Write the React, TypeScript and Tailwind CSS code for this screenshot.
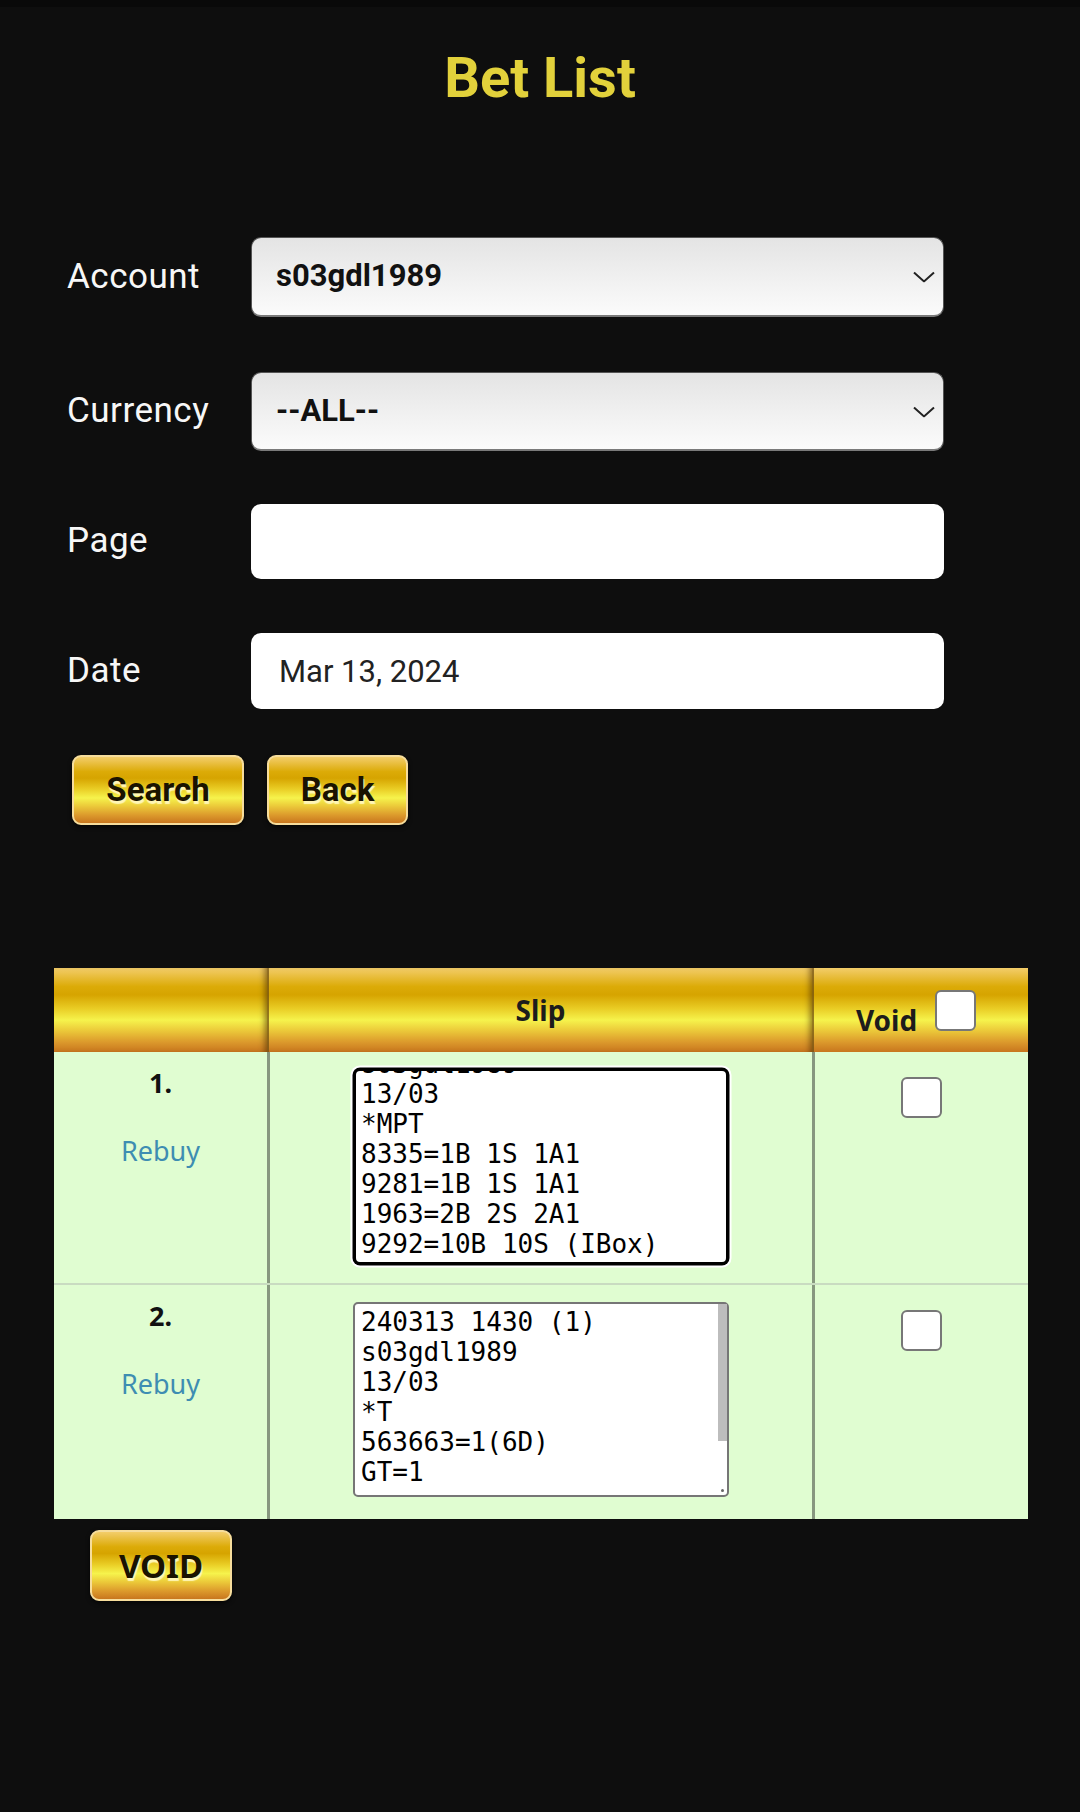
import { useEffect, useRef } from "react";

const gold =
  "bg-[linear-gradient(to_bottom,#f3cd6a_0%,#dcab08_22%,#d6a400_32%,#e9cc24_48%,#f6f34c_62%,#eccb3a_74%,#dc9a2c_88%,#c8761e_100%)]";

const goldButton =
  "flex items-center justify-center rounded-[9px] border-2 border-[#f6dd9c] text-[33px] font-bold text-[#1a1300] [text-shadow:1px_3px_1px_#fff6b8] shadow-[0_2px_4px_rgba(0,0,0,0.7)]";

const slipText = [
  "240313 1430 (1)",
  "s03gdl1989",
  "13/03",
  "*MPT",
  "8335=1B 1S 1A1",
  "9281=1B 1S 1A1",
  "1963=2B 2S 2A1",
  "9292=10B 10S (IBox)",
  "",
].join("\n");

const slipText2 = ["240313 1430 (1)", "s03gdl1989", "13/03", "*T", "563663=1(6D)", "GT=1", "", ""].join("\n");

function Chevron() {
  return (
    <svg
      width="22"
      height="11"
      viewBox="0 0 22 11"
      className="pointer-events-none absolute right-[9px] top-1/2 -translate-y-1/2"
    >
      <polyline points="1,1 11,10 21,1" fill="none" stroke="#222" strokeWidth="2" />
    </svg>
  );
}

function FormRow({ label, className, children }: { label: string; className: string; children: React.ReactNode }) {
  return (
    <div className={`flex items-center ${className}`}>
      <label className="w-[184px] text-[35px] tracking-[0.5px] text-[#f7f7f7]">{label}</label>
      <div className="relative w-[693px]">{children}</div>
    </div>
  );
}

function Checkbox() {
  return (
    <input
      type="checkbox"
      className="h-[41px] w-[41px] appearance-none rounded-[6px] border-2 border-[#777] bg-white"
    />
  );
}

export default function App() {
  const firstSlip = useRef<HTMLTextAreaElement>(null);

  useEffect(() => {
    if (firstSlip.current) firstSlip.current.scrollTop = 55;
  }, []);

  return (
    <div className="min-h-screen bg-[#0e0e0e] font-['Roboto',sans-serif]">
      <div className="h-[7px] bg-[#090909]" />
      <h1 className="mt-[38px] text-center text-[56px] font-bold leading-[66px] text-[#e2d13b]">Bet List</h1>

      <form className="mt-[126px] pl-[67px]">
        <FormRow label="Account" className="h-[80px]">
          <select className="h-[80px] w-full appearance-none rounded-[10px] border border-[#555] border-b-2 border-b-[#7a7a7a] bg-[linear-gradient(to_bottom,#e4e4e4,#fbfbfb)] pl-[24px] text-[31px] font-bold text-[#111]">
            <option>s03gdl1989</option>
          </select>
          <Chevron />
        </FormRow>

        <FormRow label="Currency" className="mt-[55px] h-[79px]">
          <select className="h-[79px] w-full appearance-none rounded-[10px] border border-[#555] border-b-2 border-b-[#7a7a7a] bg-[linear-gradient(to_bottom,#e4e4e4,#fbfbfb)] pl-[24px] text-[31px] font-bold text-[#111]">
            <option>--ALL--</option>
          </select>
          <Chevron />
        </FormRow>

        <FormRow label="Page" className="mt-[53px] h-[75px]">
          <input type="text" className="h-[75px] w-full rounded-[10px] bg-white px-[28px] text-[31px] text-[#222]" />
        </FormRow>

        <FormRow label="Date" className="mt-[54px] h-[76px]">
          <input
            type="text"
            defaultValue="Mar 13, 2024"
            className="h-[76px] w-full rounded-[10px] bg-white px-[28px] text-[31px] text-[#222]"
          />
        </FormRow>

        <div className="mt-[46px] flex gap-[23px] pl-[5px]">
          <button type="button" className={`${goldButton} ${gold} h-[70px] w-[172px]`}>
            Search
          </button>
          <button type="button" className={`${goldButton} ${gold} h-[70px] w-[141px]`}>
            Back
          </button>
        </div>
      </form>

      <div className="ml-[54px] mt-[143px] w-[974px] font-['Noto_Sans',sans-serif]">
        {/* header */}
        <div className={`grid h-[84px] grid-cols-[213px_545px_216px] ${gold}`}>
          <div className="shadow-[inset_-6px_0_6px_-4px_rgba(70,40,0,0.6)]" />
          <div className="flex items-center justify-center border-l-2 border-[#6b4a10]/70 text-[28px] font-bold text-[#1c1c1c] shadow-[inset_-6px_0_6px_-4px_rgba(70,40,0,0.6)]">
            Slip
          </div>
          <div className="flex items-center justify-center gap-[18px] border-l-2 border-[#6b4a10]/70 pr-[10px] text-[28px] font-bold text-[#1c1c1c]">
            <span className="mt-[20px]">Void</span>
            <Checkbox />
          </div>
        </div>

        {/* rows */}
        <div className="grid h-[231px] grid-cols-[213px_545px_216px] bg-[#e0fdd1]">
          <div className="flex flex-col items-center pt-[14px]">
            <span className="text-[27px] font-bold leading-[34px] text-[#111]">1.</span>
            <a href="#" className="mt-[34px] text-[27px] leading-[34px] text-[#3e8db2]">
              Rebuy
            </a>
          </div>
          <div className="flex justify-center border-l-[3px] border-[#87977f] pt-[17px]">
            <textarea
              ref={firstSlip}
              readOnly
              wrap="off"
              defaultValue={slipText}
              className="block h-[195px] w-[374px] resize-none overflow-hidden rounded-[6px] border-2 border-black bg-white px-[5px] pt-[3px] font-['DejaVu_Sans_Mono',monospace] text-[26px] leading-[30px] text-black shadow-[0_0_0_1.5px_#000,0_0_0_3.5px_#fff] outline-none [scrollbar-width:none]"
            />
          </div>
          <div className="flex justify-center border-l-[3px] border-[#87977f] pt-[25px]">
            <Checkbox />
          </div>
        </div>

        <div className="grid h-[236px] grid-cols-[213px_545px_216px] border-t-2 border-[#c9dbc1] bg-[#e0fdd1]">
          <div className="flex flex-col items-center pt-[14px]">
            <span className="text-[27px] font-bold leading-[34px] text-[#111]">2.</span>
            <a href="#" className="mt-[34px] text-[27px] leading-[34px] text-[#3e8db2]">
              Rebuy
            </a>
          </div>
          <div className="flex items-start justify-center border-l-[3px] border-[#87977f] pt-[17px]">
            <div className="relative">
              <textarea
                readOnly
                wrap="off"
                defaultValue={slipText2}
                className="block h-[195px] w-[376px] resize-none overflow-hidden rounded-[5px] border-2 border-[#767676] bg-white px-[6px] pt-[3px] font-['DejaVu_Sans_Mono',monospace] text-[26px] leading-[30px] text-black outline-none [scrollbar-width:none]"
              />
              {/* overlay scroll thumb and resize grip */}
              <span className="absolute right-[2px] top-[2px] h-[137px] w-[9px] bg-[#bdbdbd]" />
              <span className="absolute bottom-[5px] right-[5px] h-[3px] w-[3px] rounded-full bg-[#666]" />
            </div>
          </div>
          <div className="flex justify-center border-l-[3px] border-[#87977f] pt-[25px]">
            <Checkbox />
          </div>
        </div>

        <button type="button" className={`${goldButton} ${gold} ml-[36px] mt-[11px] h-[71px] w-[142px]`}>
          VOID
        </button>
      </div>
    </div>
  );
}
